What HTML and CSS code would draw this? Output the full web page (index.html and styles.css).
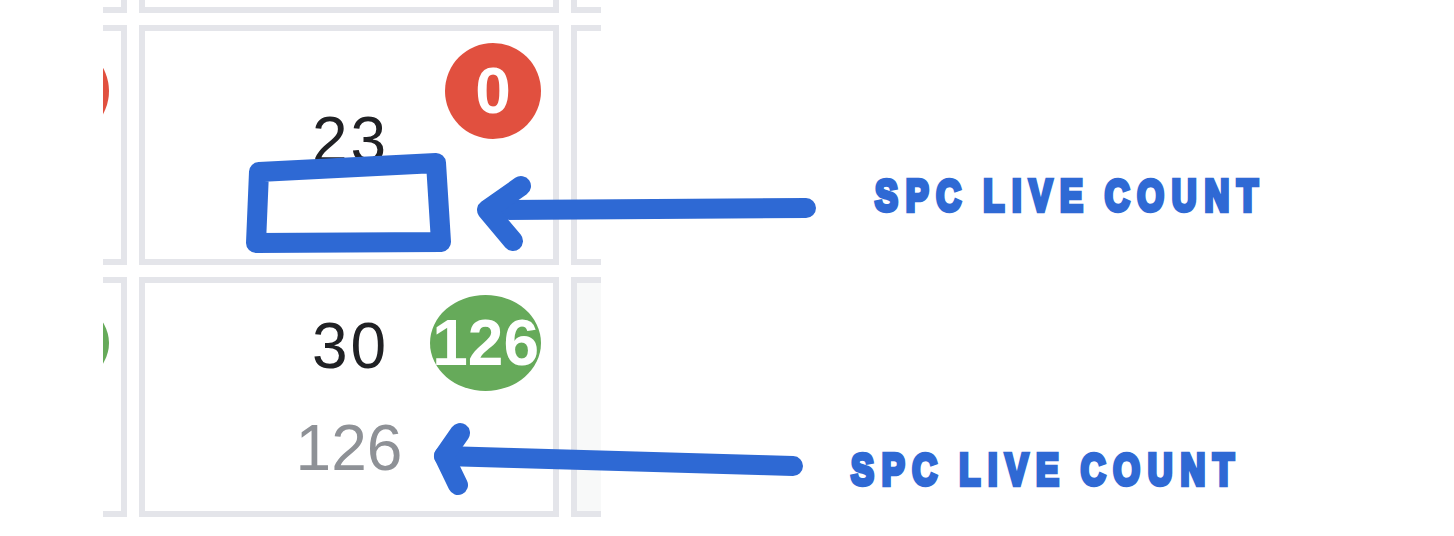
FILE: index.html
```html
<!DOCTYPE html>
<html lang="en">
<head>
<meta charset="utf-8">
<title>SPC live count</title>
<link rel="stylesheet" href="styles.css">
</head>
<body>
<div class="page">
  <div class="board">
    <div class="grid">
      <div class="cell"></div>
      <div class="cell"></div>
      <div class="cell"></div>

      <div class="cell">
        <span class="badge red"></span>
      </div>
      <div class="cell">
        <div class="planned">23</div>
        <div class="live"></div>
        <span class="badge red">0</span>
      </div>
      <div class="cell"></div>

      <div class="cell">
        <span class="badge green wide"></span>
      </div>
      <div class="cell">
        <div class="planned">30</div>
        <div class="live">126</div>
        <span class="badge green">126</span>
      </div>
      <div class="cell muted"></div>
    </div>
  </div>

  <svg class="marks" width="1454" height="536" viewBox="0 0 1454 536">
    <defs>
      <filter id="soft" x="-5%" y="-5%" width="110%" height="110%">
        <feGaussianBlur stdDeviation="0.7"/>
      </filter>
    </defs>
    <g class="pen" filter="url(#soft)">
      <path d="M259 172 L436 163 L441 242 L256 243 Z"/>
      <path d="M806 208 L488 210"/>
      <path d="M521 186 L487 210 L513 241"/>
      <path d="M793 466 L444 456"/>
      <path d="M460 433 L444 456 L458 485"/>
    </g>
    <text class="label" transform="translate(875 211) scale(0.78 1)">SPC LIVE COUNT</text>
    <text class="label" transform="translate(851 485) scale(0.78 1)">SPC LIVE COUNT</text>
  </svg>
</div>
</body>
</html>
```
FILE: styles.css
```css
html, body {
  margin: 0;
  padding: 0;
  background: #ffffff;
}

.page {
  position: relative;
  width: 1454px;
  height: 536px;
  overflow: hidden;
  font-family: "Liberation Sans", Arial, sans-serif;
}

.board {
  margin-left: 103px;
  width: 498px;
  height: 517px;
  overflow: hidden;
}

.grid {
  display: grid;
  grid-template-columns: repeat(3, 420px);
  grid-auto-rows: 240px;
  gap: 12px;
  width: max-content;
  margin-left: -396px;
  margin-top: -227px;
}

.cell {
  position: relative;
  box-sizing: border-box;
  border: 6px solid #e4e5ea;
  background: #ffffff;
  display: flex;
  flex-direction: column;
  align-items: center;
  justify-content: center;
  gap: 10px;
}

.cell.muted {
  background: #f8f9f9;
}

.planned {
  font-size: 64px;
  line-height: 92px;
  letter-spacing: 3px;
  padding-left: 3px;
  color: #202124;
}

.live {
  font-size: 64px;
  line-height: 92px;
  color: #8e9196;
}

.live:empty {
  height: 0;
}

.badge {
  position: absolute;
  top: 12px;
  right: 12px;
  box-sizing: border-box;
  min-width: 96px;
  height: 96px;
  padding: 0 2px;
  border-radius: 50%;
  font-size: 64px;
  font-weight: bold;
  line-height: 96px;
  text-align: center;
  color: #ffffff;
}

.badge.wide {
  min-width: 124px;
}

.badge.red {
  background: #e1503f;
}

.badge.green {
  background: #66aa5a;
}

.marks {
  position: absolute;
  top: 0;
  left: 0;
  pointer-events: none;
}

.pen path {
  fill: none;
  stroke: #2f69d4;
  stroke-width: 20;
  stroke-linecap: round;
  stroke-linejoin: round;
}

.label {
  font-family: "Liberation Sans", Arial, sans-serif;
  font-weight: bold;
  font-size: 44px;
  letter-spacing: 10px;
  word-spacing: -4px;
  fill: #2f69d4;
  stroke: #2f69d4;
  stroke-width: 4.5px;
}
```
